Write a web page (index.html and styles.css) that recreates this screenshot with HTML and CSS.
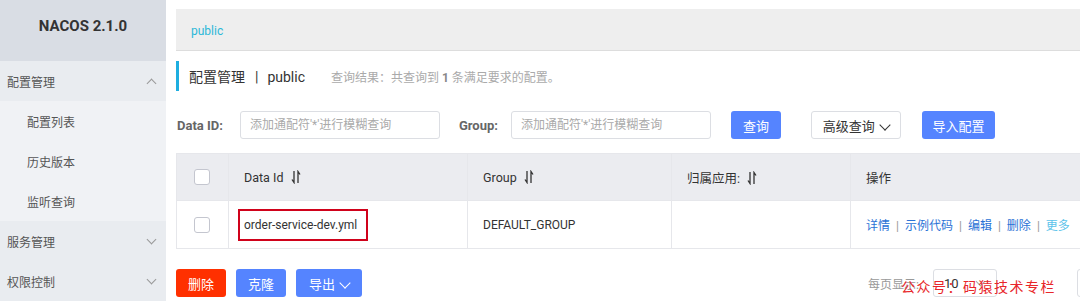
FILE: index.html
```html
<!DOCTYPE html>
<html lang="zh-CN">
<head>
    <meta charset="UTF-8">
    <title>NACOS 配置管理</title>
    <link rel="stylesheet" href="styles.css">
</head>
<body>

    <aside class="sidebar">
        <div class="brand">NACOS 2.1.0</div>
        <div class="menu-group">配置管理 <span class="chev up"></span></div>
        <div class="menu-item active">配置列表</div>
        <div class="menu-item">历史版本</div>
        <div class="menu-item">监听查询</div>
        <div class="menu-group">服务管理 <span class="chev"></span></div>
        <div class="menu-group">权限控制 <span class="chev"></span></div>
    </aside>

    <main class="main">
        <div class="crumb">public</div>

        <div class="title-row">
            <span class="title">配置管理<span class="sep">|</span>public</span>
            <span class="summary">查询结果：共查询到 <b>1</b> 条满足要求的配置。</span>
        </div>

        <div class="search-row">
            <label class="field-label">Data ID:</label>
            <input class="field" placeholder="添加通配符'*'进行模糊查询">
            <label class="field-label group-label">Group:</label>
            <input class="field" placeholder="添加通配符'*'进行模糊查询">
            <button class="btn btn-primary btn-query">查询</button>
            <button class="btn btn-normal btn-adv">高级查询 <span class="arrow"></span></button>
            <button class="btn btn-primary btn-import">导入配置</button>
        </div>

        <table class="config-table">
            <colgroup>
                <col style="width: 52px">
                <col style="width: 239px">
                <col style="width: 204px">
                <col style="width: 179px">
                <col>
            </colgroup>
            <thead>
                <tr>
                    <th class="col-check"><span class="checkbox"></span></th>
                    <th>Data Id <svg class="sort" viewBox="0 0 10 14"><path d="M3 1V12.5L1 9.5M7 13V1.5L9 4.5"/></svg></th>
                    <th>Group <svg class="sort" viewBox="0 0 10 14"><path d="M3 1V12.5L1 9.5M7 13V1.5L9 4.5"/></svg></th>
                    <th>归属应用: <svg class="sort" viewBox="0 0 10 14"><path d="M3 1V12.5L1 9.5M7 13V1.5L9 4.5"/></svg></th>
                    <th>操作</th>
                </tr>
            </thead>
            <tbody>
                <tr>
                    <td class="col-check"><span class="checkbox"></span></td>
                    <td><span class="marked">order-service-dev.yml</span></td>
                    <td>DEFAULT_GROUP</td>
                    <td></td>
                    <td class="ops">
                        <a>详情</a><i>|</i><a>示例代码</a><i>|</i><a>编辑</a><i>|</i><a>删除</a><i>|</i><a class="more">更多</a>
                    </td>
                </tr>
            </tbody>
        </table>

        <div class="footer-row">
            <button class="btn btn-danger">删除</button>
            <button class="btn btn-primary">克隆</button>
            <button class="btn btn-primary btn-export">导出 <span class="arrow light"></span></button>
            <div class="pager">
                <span class="pager-label">每页显示:</span>
                <span class="page-size">10 <span class="chev small"></span></span>
                <span class="page-next"></span>
                <span class="watermark">公众号：码猿技术专栏</span>
            </div>
        </div>
    </main>

</body>
</html>
```

FILE: styles.css
```css
body {
    margin: 0;
    width: 1080px;
    height: 301px;
    overflow: hidden;
    display: flex;
    font-family: Roboto, "Noto Sans CJK SC", sans-serif;
    color: #333;
    background: #fff;
}

.sidebar {
    width: 166px;
    flex: none;
    background: #eef0f3;
    color: #555;
    font-size: 12px;
}
.brand {
    height: 61px;
    line-height: 52px;
    text-align: center;
    font-weight: bold;
    font-size: 15px;
    color: #333;
    background: #d9dde4;
}
.menu-group,
.menu-item {
    height: 40px;
    display: flex;
    align-items: center;
}
.menu-group {
    justify-content: space-between;
    padding: 0 11px 0 7px;
    background: #e9ecf0;
}
.menu-item {
    padding-left: 27px;
    background: #f0f2f5;
}
.chev {
    display: inline-block;
    width: 6px;
    height: 6px;
    border-right: 1px solid #999;
    border-bottom: 1px solid #999;
    transform: rotate(45deg);
    margin-top: -4px;
}
.chev.up {
    transform: rotate(-135deg);
    margin-top: 4px;
}

.main {
    flex: none;
    width: 930px;
    padding: 9px 0 0 10px;
}
.crumb {
    height: 41px;
    line-height: 44px;
    padding-left: 15px;
    background: #eeeeee;
    border-bottom: 1px solid #ddd;
    color: #2cb8d8;
    font-size: 12px;
}

.title-row {
    margin-top: 10px;
    height: 30px;
    border-left: 3px solid #1eaee0;
    display: flex;
    align-items: center;
    padding-left: 10px;
}
.title {
    font-size: 14px;
    color: #333;
}
.sep {
    margin: 0 9px 0 10px;
}
.summary {
    margin-left: 26px;
    font-size: 12px;
    color: #aaa;
}
.summary b {
    color: #888;
}

.search-row {
    margin-top: 20px;
    display: flex;
    align-items: center;
    height: 28px;
}
.field-label {
    font-size: 13px;
    font-weight: bold;
    color: #666;
    margin: 0 17px 0 1px;
}
.group-label {
    margin: 0 13px 0 19px;
}
.field {
    box-sizing: border-box;
    width: 200px;
    height: 28px;
    border: 1px solid #dcdee3;
    border-radius: 3px;
    padding: 0 9px;
    font-family: inherit;
    font-size: 12px;
}
.field::placeholder {
    color: #aaa;
}

.btn {
    box-sizing: border-box;
    height: 28px;
    width: 50px;
    border: none;
    border-radius: 3px;
    padding: 0;
    font-family: inherit;
    font-size: 13px;
    color: #fff;
    white-space: nowrap;
    cursor: pointer;
}
.btn-primary {
    background: #5584ff;
}
.btn-danger {
    background: #ff3000;
}
.btn-normal {
    background: #fff;
    border: 1px solid #dcdee3;
    color: #333;
}
.btn-query {
    margin-left: 20px;
}
.btn-adv {
    margin-left: 30px;
    width: 90px;
}
.btn-import {
    margin-left: 21px;
    width: 73px;
}
.arrow {
    display: inline-block;
    width: 7px;
    height: 7px;
    border-right: 1.3px solid #333;
    border-bottom: 1.3px solid #333;
    transform: rotate(45deg);
    margin: 0 0 4px 3px;
    vertical-align: middle;
}
.arrow.light {
    border-color: #fff;
}

.config-table {
    margin-top: 14px;
    table-layout: fixed;
    border-collapse: collapse;
    width: 930px;
    font-size: 12px;
}
.config-table th,
.config-table td {
    border: 1px solid #e6e7eb;
    text-align: left;
    padding: 0 0 0 15px;
    font-weight: normal;
}
.config-table th {
    height: 46px;
    background: #ebecf0;
    font-size: 12.5px;
}
.config-table td {
    height: 47px;
}
.config-table .col-check {
    padding-left: 17px;
}
.checkbox {
    display: block;
    box-sizing: border-box;
    width: 16px;
    height: 16px;
    border: 1px solid #c4c6cf;
    border-radius: 3px;
    background: #fff;
}
.sort {
    width: 10px;
    height: 14px;
    margin-left: 4px;
    vertical-align: -2px;
    fill: none;
    stroke: #333;
    stroke-width: 1.3;
}
.marked {
    display: inline-block;
    margin-left: -6px;
    padding: 7px 9px 7px 4px;
    line-height: 14px;
    border: 2px solid #d0021b;
}
.ops {
    white-space: nowrap;
}
.ops a {
    color: #2b72d6;
}
.ops a.more {
    color: #5cc3ea;
}
.ops i {
    font-style: normal;
    color: #999;
    margin: 0 6px;
}

.footer-row {
    margin-top: 20px;
    display: flex;
    align-items: center;
}
.footer-row .btn {
    flex: none;
    margin-right: 10px;
}
.footer-row .btn-export {
    width: 66px;
}
.pager {
    position: relative;
    flex: none;
    margin-left: 496px;
    display: flex;
    align-items: center;
}
.pager-label {
    white-space: nowrap;
    font-size: 12px;
    color: #999;
}
.page-size {
    box-sizing: border-box;
    flex: none;
    display: flex;
    align-items: center;
    justify-content: space-between;
    margin-left: 14px;
    width: 64px;
    height: 28px;
    padding: 0 12px 0 10px;
    border: 1px solid #dcdee3;
    border-radius: 3px;
    font-size: 13px;
}
.chev.small {
    border-color: #aaa;
}
.page-next {
    box-sizing: border-box;
    flex: none;
    margin-left: 80px;
    width: 30px;
    height: 28px;
    border: 1px solid #dcdee3;
    border-radius: 3px;
}
.watermark {
    position: absolute;
    left: 33px;
    top: 7px;
    white-space: nowrap;
    font-family: "Noto Sans CJK SC", serif;
    font-size: 14px;
    letter-spacing: 1.5px;
    color: #e8262a;
}
```
